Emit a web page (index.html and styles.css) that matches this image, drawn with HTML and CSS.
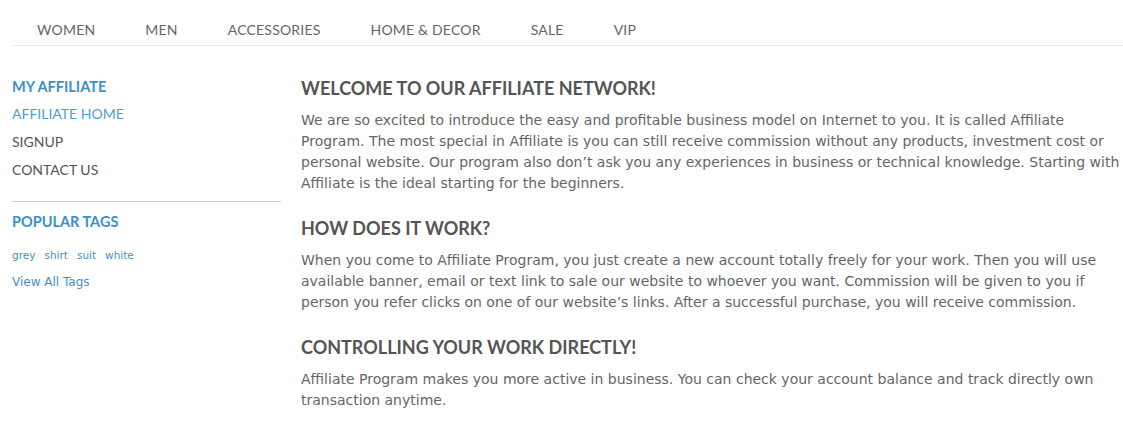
FILE: index.html
```html
<!DOCTYPE html>
<html>
<head>
<meta charset="utf-8">
<link rel="stylesheet" href="styles.css">
</head>
<body>
<div class="page">
  <nav class="topnav">
    <a class="nav-item" href="#">WOMEN</a>
    <a class="nav-item" href="#">MEN</a>
    <a class="nav-item" href="#">ACCESSORIES</a>
    <a class="nav-item" href="#">HOME &amp; DECOR</a>
    <a class="nav-item" href="#">SALE</a>
    <a class="nav-item" href="#">VIP</a>
  </nav>
  <div class="layout">
    <aside class="sidebar">
      <div class="side-title">MY AFFILIATE</div>
      <ul class="side-links">
        <li><a class="side-link active" href="#">AFFILIATE HOME</a></li>
        <li><a class="side-link" href="#">SIGNUP</a></li>
        <li><a class="side-link" href="#">CONTACT US</a></li>
      </ul>
      <div class="divider"></div>
      <div class="side-title tags-title">POPULAR TAGS</div>
      <div class="tags">
        <a href="#">grey</a>
        <a href="#">shirt</a>
        <a href="#">suit</a>
        <a href="#">white</a>
      </div>
      <a class="view-all" href="#">View All Tags</a>
    </aside>
    <main class="content">
      <h1 class="section-title first">WELCOME TO OUR AFFILIATE NETWORK!</h1>
      <p class="text">We are so excited to introduce the easy and profitable business model on Internet to you. It is called Affiliate Program. The most special in Affiliate is you can still receive commission without any products, investment cost or personal website. Our program also don’t ask you any experiences in business or technical knowledge. Starting with Affiliate is the ideal starting for the beginners.</p>
      <h2 class="section-title">HOW DOES IT WORK?</h2>
      <p class="text">When you come to Affiliate Program, you just create a new account totally freely for your work. Then you will use available banner, email or text link to sale our website to whoever you want. Commission will be given to you if person you refer clicks on one of our website’s links. After a successful purchase, you will receive commission.</p>
      <h2 class="section-title">CONTROLLING YOUR WORK DIRECTLY!</h2>
      <p class="text">Affiliate Program makes you more active in business. You can check your account balance and track directly own transaction anytime.</p>
    </main>
  </div>
</div>
</body>
</html>
```

FILE: styles.css
```css
* { box-sizing: border-box; }
html, body { margin: 0; padding: 0; background: #fff; }
body { font-family: "DejaVu Sans", Verdana, sans-serif; }
a { text-decoration: none; }

.page { padding-left: 12px; }

.topnav {
  display: flex;
  height: 46px;
  border-bottom: 1px solid #ebebeb;
}
.nav-item {
  font-family: "Lato", sans-serif;
  font-size: 14px;
  font-weight: 400;
  color: #666;
  padding: 21px 25px 0;
  line-height: 18px;
  letter-spacing: 0.2px;
}

.layout {
  display: flex;
  gap: 20px;
}

.sidebar {
  width: 269px;
  flex: none;
  padding-top: 28px;
}
.side-title {
  font-family: "Lato", sans-serif;
  font-size: 14.5px;
  font-weight: 700;
  color: #3d8fc8;
  line-height: 26px;
}
.side-links { list-style: none; margin: 0; padding: 0; }
.side-link {
  display: block;
  font-family: "Lato", sans-serif;
  font-size: 14px;
  color: #555;
  line-height: 28px;
}
.side-link.active { color: #4f9ed6; }
.divider {
  border-top: 1px solid #d0d0d0;
  margin-top: 17px;
}
.tags-title { margin-top: 8px; line-height: 24px; }
.tags {
  display: flex;
  gap: 9px;
  margin-top: 11px;
  line-height: 20px;
}
.tags a {
  font-family: "DejaVu Sans", Tahoma, sans-serif;
  font-size: 10.5px;
  color: #4a8ec6;
}
.view-all {
  display: block;
  margin-top: 7px;
  font-family: "DejaVu Sans", Tahoma, sans-serif;
  font-size: 12px;
  line-height: 20px;
  color: #4a8ec6;
}

.content { flex: 1; min-width: 0; }
.section-title {
  font-family: "Lato", sans-serif;
  font-size: 18px;
  font-weight: 700;
  color: #555;
  line-height: 24px;
  margin: 22px 0 0;
}
.section-title.first { margin-top: 30px; }
.text {
  font-family: "DejaVu Sans", Verdana, sans-serif;
  font-size: 14px;
  line-height: 21px;
  color: #666;
  margin: 10px 0 0;
}
```
